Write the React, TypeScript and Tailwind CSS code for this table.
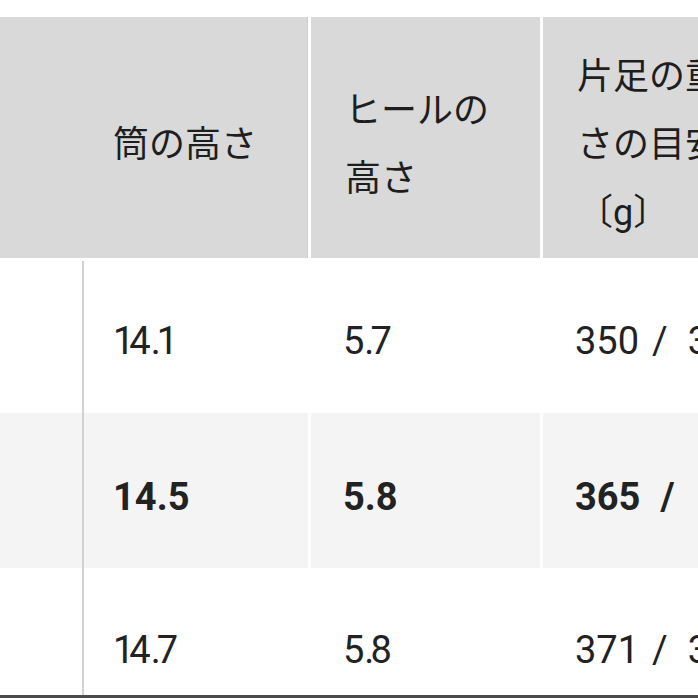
import React from "react";

const rows = [
  { a: "14.1", b: "5.7", c1: "350", c2: "360", bold: false, bg: "bg-white", h: "h-[152px]", pt: "pt-[8px]" },
  { a: "14.5", b: "5.8", c1: "365", c2: "375", bold: true, bg: "bg-[#f4f4f4]", h: "h-[155px]", pt: "pt-[13px]" },
  { a: "14.7", b: "5.8", c1: "371", c2: "381", bold: false, bg: "bg-white", h: "h-[127px]", pt: "pt-[37px]" },
];

function Num({ v, bold }: { v: string; bold: boolean }) {
  return (
    <span>
      {v.split("").map((ch, i) => {
        if (!bold && ch === "1") return <span key={i} className="tracking-[-5px]">1</span>;
        if (!bold && ch === ".") return <span key={i} className="tracking-[-4px]">.</span>;
        return <span key={i}>{ch}</span>;
      })}
    </span>
  );
}

export default function App() {
  return (
    <div className="w-[698px] h-[698px] overflow-hidden bg-white flex flex-col font-[Roboto,'Noto_Sans_CJK_JP',sans-serif] text-[#222]">
      <div className="h-[17px] shrink-0" />
      <div className="flex h-[241px] shrink-0 bg-[#d9d9d9] text-[36px] leading-[68px] text-[#1e1e1e]">
        <div className="w-[307px] shrink-0 flex items-center pt-[14px] pl-[113px]">筒の高さ</div>
        <div className="w-[1px] shrink-0 bg-[#cfcfcf]" />
        <div className="w-[3px] shrink-0 bg-white" />
        <div className="w-[229px] shrink-0 flex items-center pt-[14px] pl-[34px] pr-[30px]">ヒールの高さ</div>
        <div className="w-[3px] shrink-0 bg-white" />
        <div className="w-[232px] shrink-0 flex items-center pt-[14px] pl-[34px] pr-[34px]">片足の重さの目安〔g〕</div>
      </div>
      <div className="h-[3px] shrink-0" />
      {rows.map((r, i) => (
        <div key={i} className={`flex shrink-0 ${r.h} ${r.bg} text-[38px] ${r.bold ? "font-bold" : "font-normal"}`}>
          <div className="w-[82px] shrink-0" />
          <div className="w-[2px] shrink-0 bg-[#d2d2d2]" />
          <div className={`w-[224px] shrink-0 flex items-center ${r.pt} pl-[29px]`}>
            <Num v={r.a} bold={r.bold} />
          </div>
          <div className="w-[3px] shrink-0 bg-white" />
          <div className={`w-[229px] shrink-0 flex items-center ${r.pt} pl-[32px]`}>
            <Num v={r.b} bold={r.bold} />
          </div>
          <div className="w-[3px] shrink-0 bg-white" />
          <div className={`w-[232px] shrink-0 flex items-center whitespace-nowrap ${r.pt} pl-[32px]`}>
            <span>{r.c1}</span>
            <span className={r.bold ? "ml-[20px] mr-[26px]" : "ml-[13px] mr-[20px]"}>/</span>
            <span>{r.c2}</span>
          </div>
        </div>
      ))}
      <div className="h-[3px] shrink-0 bg-[#4a4a4a]" />
    </div>
  );
}
